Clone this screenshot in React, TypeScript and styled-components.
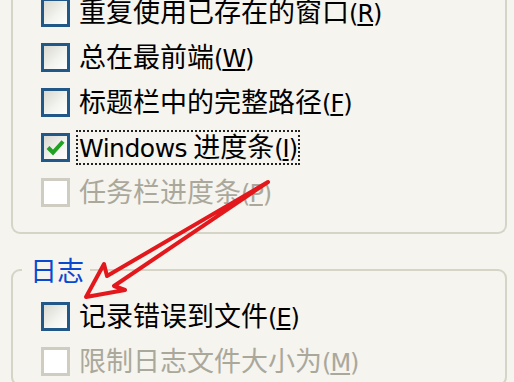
import styled, { createGlobalStyle } from "styled-components";

import type { FC, ReactNode } from "react";

const GlobalStyle = createGlobalStyle`
  html, body {
    margin: 0;
    padding: 0;
    background: #f5f4ef;
    overflow: hidden;
  }
  body {
    font-family: "Noto Sans CJK SC", "Noto Sans", sans-serif;
  }
`;

const Page = styled.div`
  position: relative;
  width: 514px;
  height: 382px;
  overflow: hidden;
  padding: 0 7px 0 11px;
  box-sizing: border-box;
`;

const TopGroup = styled.div`
  margin-top: -10px;
  border: 2px solid #d6d4c6;
  border-top: none;
  border-radius: 0 0 9px 9px;
  padding: 0 0 17px 28px;
  display: flex;
  flex-direction: column;
`;

const LogGroup = styled.fieldset`
  margin: 22px 0 0;
  border: 2px solid #d6d4c6;
  border-radius: 9px;
  padding: 10px 0 0 28px;
  display: flex;
  flex-direction: column;
  min-width: 0;
`;

const Legend = styled.legend`
  margin-left: -19px;
  padding: 0 6px 0 8px;
  color: #0a48d0;
  font-size: 27px;
  line-height: 28px;
`;

const Row = styled.div`
  height: 45px;
  display: flex;
  align-items: center;
  gap: 6px;
`;

const Box = styled.div<{ $disabled?: boolean }>`
  width: 29px;
  height: 29px;
  box-sizing: border-box;
  flex: none;
  display: flex;
  align-items: center;
  justify-content: center;
  border: 3px solid ${(p) => (p.$disabled ? "#cfcdc1" : "#215887")};
  background: ${(p) =>
    p.$disabled
      ? "#ffffff"
      : "linear-gradient(135deg, #d9d8d0 0%, #f2f2ee 55%, #ffffff 100%)"};
`;

const Label = styled.span<{ $disabled?: boolean; $focused?: boolean }>`
  font-size: 27px;
  line-height: 28px;
  white-space: nowrap;
  color: ${(p) => (p.$disabled ? "#aaa89b" : "#000000")};
  padding: 0 1px;
  border: 2px dotted ${(p) => (p.$focused ? "#222222" : "transparent")};
`;

const Mnemonic = styled.span`
  font-family: "DejaVu Sans", "Liberation Sans", sans-serif;
  font-size: 24px;
  letter-spacing: -1px;
`;

const Latin = styled.span`
  font-family: "DejaVu Sans", "Liberation Sans", sans-serif;
  font-size: 25px;
  letter-spacing: -0.5px;
`;

const Arrow = styled.svg`
  position: absolute;
  top: 0;
  left: 0;
  pointer-events: none;
`;

type Item = {
  label: ReactNode;
  checked?: boolean;
  disabled?: boolean;
  focused?: boolean;
};

const Key: FC<{ k: string }> = ({ k }) => (
  <Mnemonic>
    (<u>{k}</u>)
  </Mnemonic>
);

const windowItems: Item[] = [
  { label: <>重复使用已存在的窗口<Key k="R" /></> },
  { label: <>总在最前端<Key k="W" /></> },
  { label: <>标题栏中的完整路径<Key k="F" /></> },
  {
    label: (
      <>
        <Latin>Windows</Latin> 进度条<Key k="I" />
      </>
    ),
    checked: true,
    focused: true,
  },
  { label: <>任务栏进度条<Key k="P" /></>, disabled: true },
];

const logItems: Item[] = [
  { label: <>记录错误到文件<Key k="E" /></> },
  { label: <>限制日志文件大小为<Key k="M" /></>, disabled: true },
];

const CheckRow: FC<Item> = ({ label, checked, disabled, focused }) => (
  <Row>
    <Box $disabled={disabled}>
      {checked && (
        <svg width="19" height="17" viewBox="0 0 19 17">
          <path
            d="M2 8.5 L7 13.5 L17 2.5"
            fill="none"
            stroke="#21a121"
            strokeWidth="4"
            strokeLinejoin="miter"
          />
        </svg>
      )}
    </Box>
    <Label $disabled={disabled} $focused={focused}>
      {label}
    </Label>
  </Row>
);

const App: FC = () => {
  return (
    <Page>
      <GlobalStyle />
      <TopGroup>
        {windowItems.map((it, i) => (
          <CheckRow key={i} {...it} />
        ))}
      </TopGroup>
      <LogGroup>
        <Legend>日志</Legend>
        {logItems.map((it, i) => (
          <CheckRow key={i} {...it} />
        ))}
      </LogGroup>
      <Arrow width="514" height="382" viewBox="0 0 514 382">
        <polygon
          points="86,297 104,264 107,276 268,182 114,286 125,290"
          fill="none"
          stroke="#e3181c"
          strokeWidth="4"
          strokeLinejoin="round"
        />
      </Arrow>
    </Page>
  );
};

export default App;
